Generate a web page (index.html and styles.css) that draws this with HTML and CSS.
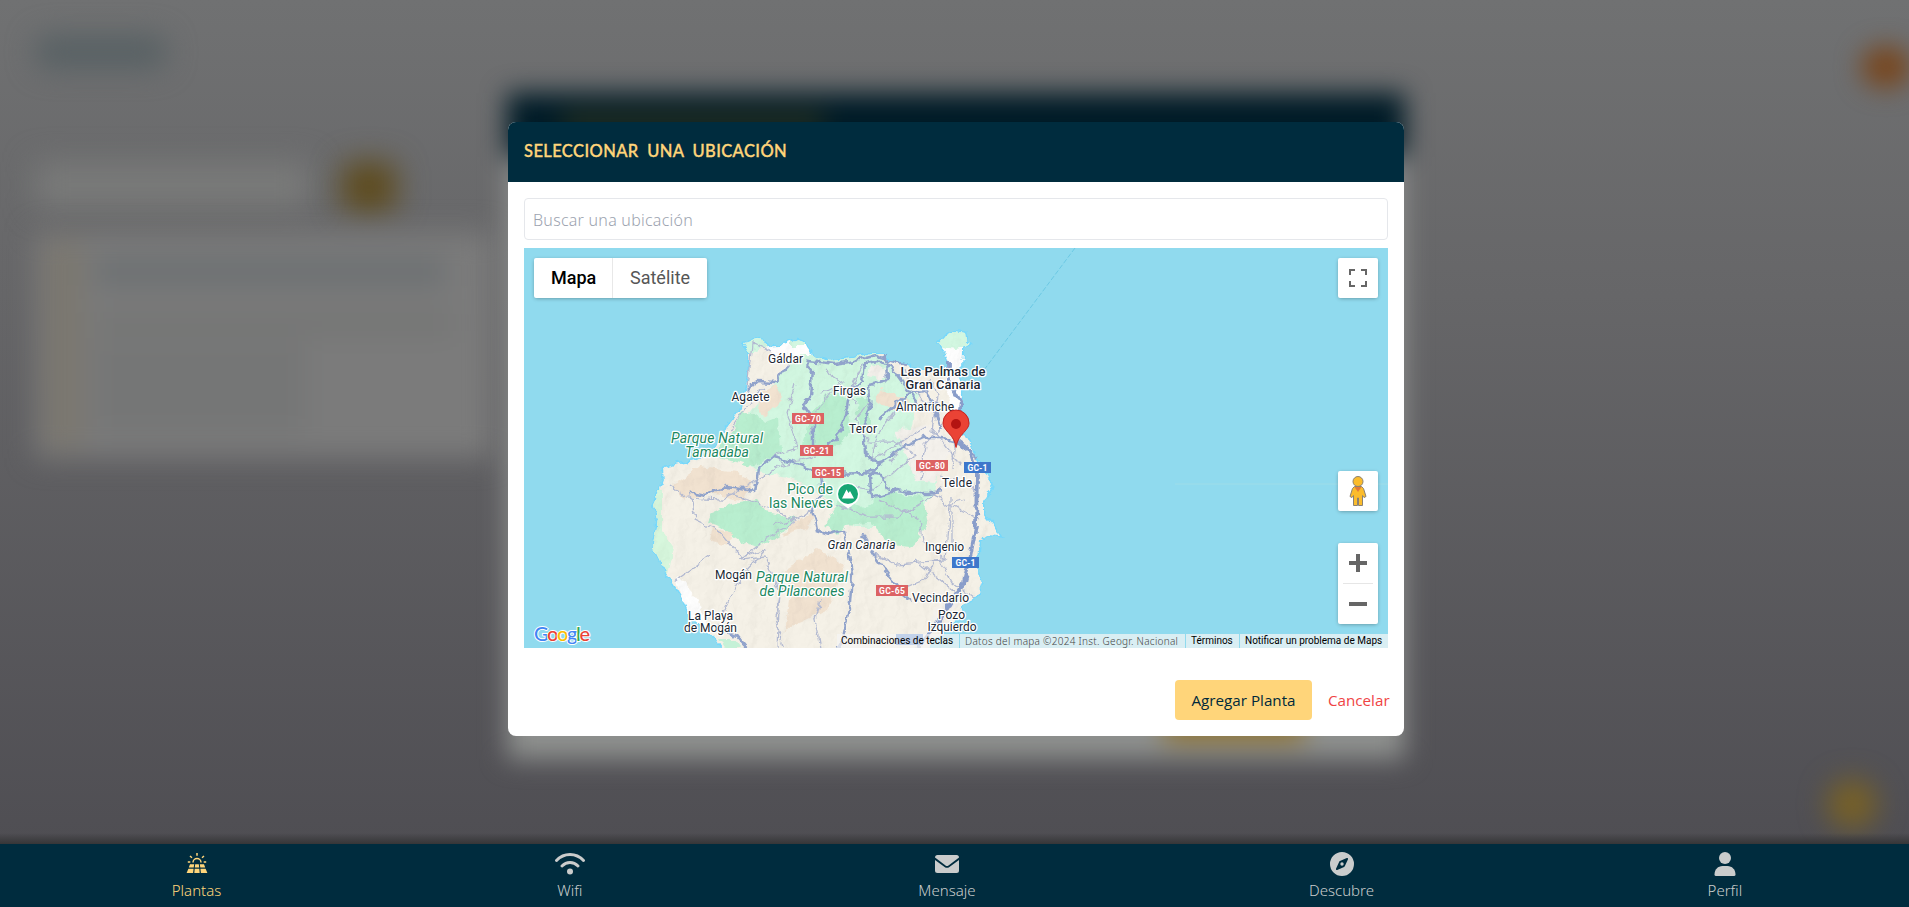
FILE: index.html
```html
<!DOCTYPE html>
<html lang="es">
<head>
<meta charset="utf-8">
<title>Plantas</title>
<link rel="stylesheet" href="styles.css">
</head>
<body>
<div class="page" aria-hidden="true">
  <div class="page-title"></div>
  <div class="page-tools"><div class="page-search"></div><div class="page-add"></div></div>
  <div class="page-card"><i></i><div class="l1"></div><div class="l2"></div><div class="l3"></div></div>
  <div class="badge"></div>
  <div class="fab"></div>
  <div class="back-modal"><div class="back-head"><i></i></div><div class="back-body"><i></i></div></div>
</div>

<main class="overlay">
  <section class="modal">
    <header class="modal-head"><h2>SELECCIONAR UNA UBICACIÓN</h2></header>
    <div class="modal-body">
      <div class="search"><span>Buscar una ubicación</span></div>
      <div class="map">
        <svg class="map-art" width="864" height="400" viewBox="524 248 864 400">
          <defs>
            <filter id="rough" x="-5%" y="-5%" width="110%" height="110%"><feTurbulence type="fractalNoise" baseFrequency=".11" numOctaves="3" seed="4"/><feDisplacementMap in="SourceGraphic" scale="8" xChannelSelector="R" yChannelSelector="G"/></filter>
            <filter id="relief" x="0" y="0" width="100%" height="100%"><feTurbulence type="fractalNoise" baseFrequency=".045 .03" numOctaves="4" seed="9"/><feDiffuseLighting surfaceScale="5" lighting-color="#fff"><feDistantLight azimuth="220" elevation="55"/></feDiffuseLighting></filter>
            <path id="coast" d="M744 343L757 340L765 341L767 347L780 346L797 339L805 342L807 349L813 357L832 361L853 358L873 353L882 354L893 362L907 365L923 370L938 372L950 365L946 353L939 344L947 335L955 331L965 333L966 342L970 344L963 348L962 365L956 370L962 390L961 407L958 425L968 443L978 460L987 477L992 487L983 500L983 513L993 525L1000 536L987 535L980 540L978 557L977 573L982 583L977 597L960 605L962 615L951 622L940 635L933 641L923 655L726 655L717 640L703 627L690 617L682 597L673 583L661 563L653 547L657 520L654 503L661 488L664 480L663 468L673 466L697 460L712 450L722 438L727 427L740 410L747 388L750 370L750 352Z"/>
            <clipPath id="land"><use href="#coast"/></clipPath>
          </defs>
          <rect x="524" y="248" width="864" height="400" fill="#90daee"/>
          <path d="M1175 484H1388" stroke="#9edde9" fill="none"/>
          <path d="M1075 248L984 370" stroke="#6cc9e4" stroke-dasharray="5 2" fill="none"/>
          <g filter="url(#rough)">
            <use href="#coast" fill="none" stroke="#76d8fb" stroke-width="3"/>
            <use href="#coast" fill="#f5f0e5"/>
            <g clip-path="url(#land)">
              <path fill="#fff" d="M765 335h48v26l-20 5-28-18zM938 345h30v70h-15zM676 580l12 40 20 10-10-30-20-25z"/>
              <path fill="#d3f8e2" d="M740 335h28v9l-14 8h-14zM790 335h22v10h-22zM938 328h36v18l-20 3-17-3zM815 355l60-3 25 25 18 20-10 45 12 20 20 5-5 25-25 35-55 0-30-30-35-20-35-5-25-20 12-30 25-30 20-25 5-12z"/>
              <path fill="#d7f7dd" d="M650 485l12 5 0 40 12 18-6 27-20-20z"/>
              <path fill="#b9efd0" d="M742 410l25 12 12-5 2 35-28 15-40-12 20-25zM828 395l18 2 5 35-20 18-28-5 8-32zM855 398h16v30l-12-5zM712 512l20-8 25-4 10 12 28 6-12 15-25 14-16-5-22-15-12-5zM825 525l15-28 25 10 20-15 38 5 5 28-18 22-18-2-22-22-25 2-8 10z"/>
              <path fill="#f2e3d1" d="M672 485l28-18 38 5 15 10-10 20-30-8-28 5zM755 395l20-10 8 12-20 20zM785 570l32-20 28 15-18 45-42 20 5-30zM880 390l30 10-10 12-25-10zM712 528l22 5-6 12-18-4zM790 525l25-14-7 17-25 8z"/>
              <path fill="#f5f2ed" d="M895 430l38-5 20 20-18 38-20-2zM870 365l20 5-8 10-14-3zM940 590l20 8-8 15-20 8z"/>
              <rect x="640" y="325" width="370" height="330" filter="url(#relief)" style="mix-blend-mode:multiply" opacity=".13"/>
            </g>
            <g fill="none" stroke="#b2b9d1" stroke-width="1.25">
              <path d="M748 388l5-45 18 8M730 430l25-35 10-8M670 485l18 13 34 2 25-15 35-20 35-8M795 383l-8 30 10 35-25 8 12 8M840 380l-22 30-8 25M862 365l-12 25 5 15M870 400l-15 20 15 22 25 0 20 12-22 20-20 15-28-5M905 400l-28 35-5 25 25-15 28-17M690 490l5 30 25 12 22 26 25-10-25 27-22 45M760 545l-20 15 25-3 15 34-3 57M745 500l-15-6 45 15 20 12-35 22M775 525l30-10 20-15M835 505l35 12 28 0 25-15 20-15M880 500l40 20 3 20 22 20-50 4-20-10M900 590l25-10 10-20M675 580l35-25M920 480l5-35 18-20M930 380l8 15-5 35 15 20 15 15M915 560l45 36M940 560l12 22 22 16M952 497l0 50M945 560l5-55M952 505l28 15M820 600l-5 20 5 28M783 582l-7 35 7 31"/>
              <path d="M940 475l30 8 5 10M955 440l-3 30M930 490l15 15 20-5M900 450l-10 12M825 370l18 12-22 12M905 370l5 20 15 12"/>
            </g>
            <g fill="none" stroke="#91a3cb" stroke-width="2.5" stroke-linejoin="round">
              <path d="M747 391l10-10 18 1 12-17M805 361l15 1 15 2 20-3 20-5 10 3 22 6"/>
              <path d="M805 360l7 8-2 30-7 6 10 15 0 30 15-3 12-14 7-25 3-18 13-8 2-18 14-2 13 7 25 35 22 2"/>
              <path d="M690 492L705 495L727 487L755 491L758 469L773 457L792 462L808 468L830 474L867 473L880 463L903 447L923 438L942 438L960 443L978 458"/>
              <path d="M886 355l1 25-18 5 2 25-8 15 2 28 12 10-7 15 2 20 25-8 18 3 12 0 15-2"/>
              <path d="M820 475l2 20-12 10 5 15 2 10 12 4 15 -4 5 24 3 20 -2 30-7 35 -8 15"/>
              <path d="M862 535l12 20 25 35 12 10M890 490l-8-15-18-2M878 420l28-25 22-4 13 38"/>
            </g>
            <path d="M949 361l0 20 12 22-3 17-8 5 5 15 15 12 7 20-1 55-5 25-7 30-19 30-22 30-20 15" fill="none" stroke="#899dca" stroke-width="3.8"/>
            <path d="M717 627l20 9 15 18" fill="none" stroke="#91a3cb" stroke-width="3"/>
            <path d="M720 640l15 0 6 8h-16z" fill="#c5f1d7"/>
          </g>
          <g class="lbl">
            <text x="785.5" y="363" textLength="35">Gáldar</text>
            <text x="750.5" y="401" textLength="38">Agaete</text>
            <text x="849.5" y="395" textLength="33">Firgas</text>
            <text x="863" y="433" textLength="28">Teror</text>
            <text x="925" y="411" textLength="58">Almatriche</text>
            <text x="957" y="487" textLength="30">Telde</text>
            <text x="944.5" y="551" textLength="39">Ingenio</text>
            <text x="733.5" y="579" textLength="37">Mogán</text>
            <text x="940.5" y="602" textLength="57">Vecindario</text>
            <text x="951.5" y="619" textLength="27">Pozo</text>
            <text x="952" y="631" textLength="49">Izquierdo</text>
            <text x="710.5" y="620" textLength="45">La Playa</text>
            <text x="710.5" y="632" textLength="53">de Mogán</text>
            <text x="861.5" y="549" textLength="68" font-style="italic">Gran Canaria</text>
          </g>
          <g class="lbl city"><text x="943" y="375.500" textLength="85">Las Palmas de</text><text x="943" y="388.500" textLength="75">Gran Canaria</text></g>
          <g class="lbl park">
            <text x="717" y="442.500" textLength="92" font-style="italic">Parque Natural</text><text x="717" y="456.500" textLength="64" font-style="italic">Tamadaba</text>
            <text x="802" y="581.500" textLength="92" font-style="italic">Parque Natural</text><text x="802" y="595.500" textLength="85" font-style="italic">de Pilancones</text>
            <text x="810" y="493.500" textLength="46">Pico de</text><text x="801" y="507.500" textLength="64">las Nieves</text>
          </g>
          <g class="shield">
            <path fill="#dc6263" d="M792 413h32v11h-32zM800 445h33v11h-33zM812 467h32v11h-32zM916 460h32v11h-32zM876 585h32v11h-32z"/>
            <path fill="#3d77cb" d="M964 462h27v11h-27zM952 557h27v11h-27zM896 634h27v11h-27z"/>
            <text x="808" y="421.500" textLength="26">GC-70</text><text x="816.5" y="453.500" textLength="26">GC-21</text><text x="828" y="475.500" textLength="26">GC-15</text><text x="932" y="468.500" textLength="26">GC-80</text><text x="892" y="593.500" textLength="26">GC-65</text>
            <text x="977.500" y="470.500" textLength="20">GC-1</text><text x="965.500" y="565.500" textLength="20">GC-1</text>
          </g>
          <path d="M848 508.500l-8-6a11.500 11.500 0 1 1 16 0z" fill="#fff"/><circle cx="848" cy="494" r="10" fill="#17a674"/><path d="M842 498.500l4.500-9 2 3.500 1.500-2 4 7.500z" fill="#fff"/>
          <path d="M956 447.500c-1.200-7-3.500-10-6.500-13.500-4-4.600-6.500-7-6.500-11a13 13 0 0 1 26 0c0 4-2.500 6.400-6.500 11-3 3.500-5.300 6.500-6.500 13.500z" fill="#ea4335" stroke="#c5221f"/><circle cx="956" cy="424" r="5" fill="#b31412"/>
          <g class="google"><text x="534" y="640.500" textLength="56"><tspan fill="#4285f4">G</tspan><tspan fill="#ea4335">o</tspan><tspan fill="#fbbc04">o</tspan><tspan fill="#4285f4">g</tspan><tspan fill="#34a853">l</tspan><tspan fill="#ea4335">e</tspan></text></g>
        </svg>
        <div class="map-ui">
          <div class="map-top">
            <div class="types"><span class="on">Mapa</span><span>Satélite</span></div>
            <div class="ctl"><svg width="18" height="18"><path d="M0 0h6v2H2v4H0zM12 0h6v6h-2V2h-4zM0 12h2v4h4v2H0zM16 12h2v6h-6v-2h4z" fill="#666"/></svg></div>
          </div>
          <div class="map-side">
            <div class="ctl"><svg width="18" height="32" viewBox="0 0 18 32"><path d="M5.500 11.500h7l2 2 2.500 8-2 1-1.500-2V30.500h-4V23h-1v7.500h-4V20.500l-1.500 2-2-1 2.500-8z" fill="#fbbc2c" stroke="#8a8173"/><path d="M5.500 12h7L9 17z" fill="#e1793b"/><circle cx="9" cy="6.500" r="5" fill="#fbbc2c" stroke="#8a8173"/></svg></div>
            <div class="zoomer"><svg width="40" height="81"><path d="M11 18h7v-7h4v7h7v4h-7v7h-4v-7h-7zM11 59h18v4H11z" fill="#666"/><path d="M5 40.500h30" stroke="#e6e6e6"/></svg></div>
          </div>
        </div>
        <div class="legal"><span class="a">Combinaciones de teclas</span><span class="b">Datos del mapa ©2024 Inst. Geogr. Nacional</span><span class="c">Términos</span><span class="d">Notificar un problema de Maps</span></div>
      </div>
      <footer class="actions"><button class="primary">Agregar Planta</button><button class="cancel">Cancelar</button></footer>
    </div>
  </section>
</main>

<nav class="tabs">
  <a class="tab on"><svg width="24" height="24" viewBox="0 0 24 24" fill="currentColor"><path d="M5 12.200h4.200l-.5 3.300H3.800zM10.200 12.200h3.600l.4 3.300H9.800zM14.800 12.200H19l1.200 3.300h-4.900zM3.400 16.700h5.200l-.5 4.300H1.600zM9.700 16.700h4.600l.4 4.300H9.300zM15.400 16.700h5.200l1.800 4.300h-6.500z"/><path d="M8 10.500a4 4 0 0 1 8 0M12 1v2.800M5 4l2 1.800M19 4l-2 1.800M2.800 10h2.500M18.700 10h2.500" fill="none" stroke="currentColor" stroke-width="1.500"/></svg><span>Plantas</span></a>
  <a class="tab"><svg width="30" height="24" viewBox="0 0 30 24"><path d="M1.500 8.500C9 .5 21 .5 28.500 8.500M7 14c4.500-4.700 11.500-4.700 16 0" fill="none" stroke="currentColor" stroke-width="2.900" stroke-linecap="round"/><circle cx="15" cy="19.500" r="3" fill="currentColor"/></svg><span>Wifi</span></a>
  <a class="tab"><svg width="24" height="24" viewBox="0 0 24 24" fill="currentColor"><path d="M0 5.500Q0 3 2.500 3h19Q24 3 24 5.500L13.500 13.500q-1.500 1.100-3 0z"/><path d="M0 8l9.600 7q2.400 1.700 4.800 0L24 8v10.500q0 2.500-2.500 2.500h-19Q0 21 0 18.500z"/></svg><span>Mensaje</span></a>
  <a class="tab"><svg width="24" height="24" viewBox="0 0 24 24"><path fill="currentColor" fill-rule="evenodd" d="M12 0a12 12 0 1 0 0 24 12 12 0 0 0 0-24zM18 7.200l-3.100 6.900q-.3.600-.8.800l-6.900 3.100q-1.500.5-1.200-1.200l3.100-6.900q.3-.6.800-.8L16.800 6q1.500-.4 1.200 1.200z"/><circle cx="12" cy="12" r="1.700" fill="currentColor"/></svg><span>Descubre</span></a>
  <a class="tab"><svg width="22" height="24" viewBox="0 0 22 24" fill="currentColor"><circle cx="11" cy="6" r="6"/><path d="M.5 22.500C.5 17.500 4 14 8.500 14h5c4.500 0 8 3.500 8 8.500q0 1.500-1.500 1.500H2Q.5 24 .5 22.500z"/></svg><span>Perfil</span></a>
</nav>
</body>
</html>
```
FILE: styles.css
```css
* { box-sizing: border-box; }
body { margin: 0; width: 100vw; height: 907px; overflow: hidden; position: relative; font-family: "Noto Sans", sans-serif; background: #4f4e53; }
h2 { margin: 0; }
button { border: 0; background: none; font: inherit; padding: 0; }

/* dimmed page behind the dialog */
.page { position: absolute; inset: 0 0 63px; overflow: hidden; padding: 35px 0 0 35px; background: linear-gradient(#707172, #666668 35%, #4f4e53); }
.page::after { content: ""; position: absolute; inset: auto 0 0; height: 11px; background: linear-gradient(transparent, #363638); }
.page-title { width: 132px; height: 34px; border-radius: 14px; background: #586164; filter: blur(14px); }
.page-tools { display: flex; gap: 32px; margin-top: 93px; }
.page-search { width: 275px; height: 46px; background: #797a79; filter: blur(15px); }
.page-add { width: 54px; height: 50px; border-radius: 10px; background: #5e4b1d; filter: blur(15px); }
.page-card { width: 458px; height: 226px; margin-top: 20px; padding: 26px 40px 0 60px; position: relative; background: #7b7b7b; filter: blur(14px); }
.page-card > i { position: absolute; inset: 10px auto 10px 12px; width: 34px; background: #7b776e; }
.l1 { width: 350px; height: 28px; background: #6c7072; }
.l2 { height: 22px; margin-top: 26px; background: #747574; }
.l3 { width: 210px; height: 90px; margin-top: 8px; background: #757676; }
.badge { position: absolute; left: 1861px; top: 46px; width: 50px; height: 42px; border-radius: 50%; background: #78461d; filter: blur(13px); }
.fab { position: absolute; left: 1827px; top: 779px; width: 50px; height: 50px; border-radius: 50%; background: #786126; filter: blur(14px); }
.back-modal { position: absolute; left: 507px; top: 93px; width: 898px; height: 666px; background: #8f918f; filter: blur(13px); }
.back-head { height: 64px; padding: 20px 0 0 55px; background: #001b27; }
.back-head i { display: block; width: 262px; height: 20px; background: #26301f; }
.back-body { height: 602px; display: flex; align-items: flex-end; justify-content: flex-end; padding: 0 101px 18px; }
.back-body i { width: 140px; height: 42px; background: #927530; }

.overlay { position: absolute; inset: 0 0 64px; display: flex; justify-content: center; align-items: flex-start; padding: 122px 0 0 3px; }
.modal { width: 896px; height: 614px; border-radius: 8px; overflow: hidden; background: #fff; }
.modal-head { height: 60px; padding: 0 16px 2px; display: flex; align-items: center; background: #002c3e; color: #ffd57a; }
.modal-head h2 { font: 500 16.500px/24px Lato, sans-serif; letter-spacing: .4px; word-spacing: 4px; -webkit-text-stroke: .35px #ffd57a; }
.modal-body { padding: 16px; display: flex; flex-direction: column; gap: 8px; }
.search { height: 42px; border: 1px solid #e5e7eb; border-radius: 4px; padding: 1px 8px 0; display: flex; align-items: center; color: #9ca3af; font-weight: 300; font-size: 16px; letter-spacing: .25px; }
.map { position: relative; height: 400px; overflow: hidden; }
.map-art { display: block; }
.lbl { font: 12px Roboto, sans-serif; fill: #202733; stroke: #fff; stroke-width: 2.5px; paint-order: stroke; stroke-linejoin: round; text-anchor: middle; }
.city { font-size: 13px; font-weight: 500; }
.park { font-size: 14px; fill: #1b8860; }
.shield { font: 700 8.500px Roboto, sans-serif; fill: #fff; text-anchor: middle; }
.google { font: 500 20px Lato, sans-serif; stroke: #fff; stroke-width: 2px; paint-order: stroke; }
.map-ui { position: absolute; inset: 10px 10px 24px; display: flex; flex-direction: column; justify-content: space-between; }
.map-top { display: flex; justify-content: space-between; }
.types, .ctl, .zoomer { background: #fff; border-radius: 2px; box-shadow: 0 1px 4px -1px rgba(0,0,0,.4); }
.types { display: flex; height: 40px; width: 173px; font: 18px/40px Roboto, sans-serif; color: #565656; }
.types span { padding-left: 17px; }
.types .on { width: 79px; padding-left: 17px; font-weight: 500; color: #000; border-right: 1px solid #e8e8e8; }
.ctl { width: 40px; height: 40px; display: flex; align-items: center; justify-content: center; }
.map-side { display: flex; flex-direction: column; align-items: flex-end; gap: 32px; }
.zoomer { height: 81px; }
.legal { position: absolute; right: 0; bottom: 0; display: flex; gap: 1px; height: 14px; font: 10px/13px Roboto, sans-serif; white-space: nowrap; color: #000; }
.legal span { background: rgba(245,245,245,.72); padding-left: 5px; }
.legal .a { width: 122px; padding-left: 4px; }
.legal .b { width: 225px; font: 300 10px/15px "Noto Sans", sans-serif; letter-spacing: .29px; color: #444; }
.legal .c { width: 53px; }
.legal .d { width: 148px; }
.actions { display: flex; justify-content: flex-end; gap: 16px; margin-top: 24px; font-family: "Open Sans", sans-serif; font-size: 15.200px; }
.primary { width: 137px; height: 40px; border-radius: 4px; background: #ffd57a; color: #00293b; }
.cancel { width: 60px; color: #ef4444; white-space: nowrap; text-align: left; }

.tabs { position: absolute; inset: auto 0 0; height: 63px; padding-left: 5px; display: flex; justify-content: space-around; background: #002c3e; color: #cacccc; }
.tab { display: flex; flex-direction: column; align-items: center; padding-top: 8px; gap: 3px; font-weight: 300; font-size: 15px; line-height: 22px; }
.tab.on { color: #ffd57a; }
```
